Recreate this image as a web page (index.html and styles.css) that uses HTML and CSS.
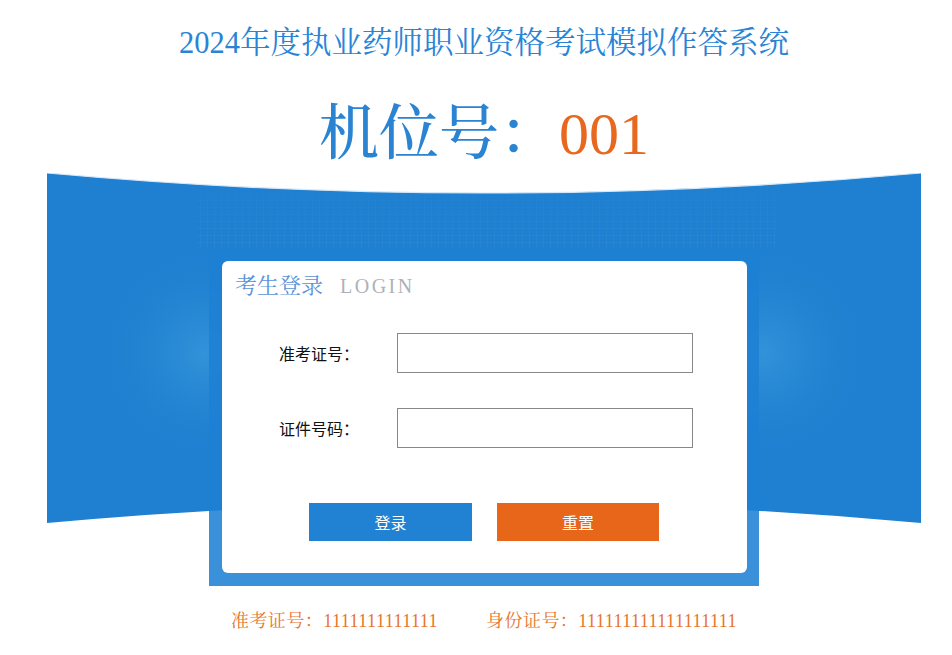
FILE: index.html
```html
<!DOCTYPE html>
<html lang="zh-CN">
<head>
  <meta charset="UTF-8">
  <title>2024年度执业药师职业资格考试模拟作答系统</title>
  <link rel="stylesheet" href="styles.css">
</head>
<body>
  <div class="page">
    <h1 class="title">2024年度执业药师职业资格考试模拟作答系统</h1>
    <div class="seat">机位号：<span class="seat-no">001</span></div>

    <div class="stage">
      <!-- curved blue banner behind the login box -->
      <svg class="banner" width="874" height="413" viewBox="0 0 874 413">
        <defs>
          <clipPath id="bannerClip">
            <path d="M0 0Q437 40 874 0V350Q437 310 0 350Z"/>
          </clipPath>
          <radialGradient id="glowL" cx="158" cy="180" r="110" gradientUnits="userSpaceOnUse">
            <stop offset="0" stop-color="#3b9bdc" stop-opacity="0.7"/>
            <stop offset="1" stop-color="#1f80d1" stop-opacity="0"/>
          </radialGradient>
          <radialGradient id="glowR" cx="716" cy="180" r="110" gradientUnits="userSpaceOnUse">
            <stop offset="0" stop-color="#3b9bdc" stop-opacity="0.7"/>
            <stop offset="1" stop-color="#1f80d1" stop-opacity="0"/>
          </radialGradient>
          <pattern id="grid" width="7" height="7" patternUnits="userSpaceOnUse">
            <path d="M7 0V7M0 7H7" stroke="#3d96da" stroke-width="1" fill="none"/>
          </pattern>
          <linearGradient id="gridFadeY" x1="0" y1="0" x2="0" y2="1">
            <stop offset="0" stop-color="#fff" stop-opacity="0"/>
            <stop offset="1" stop-color="#fff" stop-opacity="0.5"/>
          </linearGradient>
          <mask id="gridMask">
            <rect x="150" y="0" width="580" height="75" fill="url(#gridFadeY)"/>
          </mask>
        </defs>
        <g clip-path="url(#bannerClip)">
          <rect width="874" height="413" fill="#1f80d1"/>
          <rect x="0" y="40" width="330" height="320" fill="url(#glowL)"/>
          <rect x="544" y="40" width="330" height="320" fill="url(#glowR)"/>
          <rect x="150" y="0" width="580" height="75" fill="url(#grid)" mask="url(#gridMask)"/>
        </g>
        <path d="M0 0Q437 40 874 0" stroke="#d6e8f7" stroke-width="1.2" fill="none"/>
      </svg>

      <div class="frame">
        <div class="card">
          <div class="card-head">
            <span class="head-cn">考生登录</span>
            <span class="head-en">LOGIN</span>
          </div>
          <form class="login-form">
            <div class="row">
              <label for="ticket">准考证号：</label>
              <input type="text" id="ticket">
            </div>
            <div class="row">
              <label for="idno">证件号码：</label>
              <input type="text" id="idno">
            </div>
            <div class="actions">
              <button type="button" class="btn btn-login">登录</button>
              <button type="reset" class="btn btn-reset">重置</button>
            </div>
          </form>
        </div>
      </div>
    </div>

    <p class="info">
      <span>准考证号：1111111111111</span>
      <span>身份证号：111111111111111111</span>
    </p>
  </div>
</body>
</html>
```

FILE: styles.css
```css
* {
  box-sizing: border-box;
  margin: 0;
  padding: 0;
}

body {
  background: #fff;
  font-family: "Liberation Serif", "Noto Serif CJK SC", "Noto Sans CJK SC", serif;
}

.page {
  width: 874px;
  margin-left: 47px;
}

.title {
  margin-top: 28px;
  font-size: 30.5px;
  line-height: 30px;
  font-weight: normal;
  color: #2a84d6;
  text-align: center;
}

.seat {
  margin-top: 46px;
  font-size: 60px;
  line-height: 60px;
  font-weight: 500;
  color: #2a84d2;
  text-align: center;
}

.seat-no {
  font-weight: normal;
  color: #e8681e;
}

.stage {
  position: relative;
  margin-top: 9px;
  height: 413px;
  padding-top: 75px;
}

.banner {
  position: absolute;
  left: 0;
  top: 0;
}

.frame {
  position: relative;
  margin-left: 162px;
  width: 550px;
  height: 338px;
  padding: 13px 12px 13px 13px;
  background: rgba(30, 128, 211, 0.876);
}

.card {
  height: 312px;
  background: #fff;
  border-radius: 6px;
  padding: 7px 13px 0;
}

.card-head {
  display: flex;
  align-items: baseline;
  gap: 17px;
  height: 31px;
}

.head-cn {
  font-size: 22px;
  color: #5b93d6;
}

.head-en {
  font-size: 20px;
  letter-spacing: 2.5px;
  color: #aeb2b8;
}

.login-form {
  padding-top: 34px;
}

.row {
  display: flex;
  align-items: center;
  height: 40px;
  margin-bottom: 35px;
  padding-left: 44px;
}

.row label {
  width: 118px;
  font-family: "Noto Sans CJK SC", sans-serif;
  font-size: 16px;
  color: #111;
}

.row input {
  width: 296px;
  height: 40px;
  border: 1px solid #888;
  background: #fff;
}

.actions {
  display: flex;
  gap: 25px;
  padding-left: 74px;
  margin-top: 55px;
}

.btn {
  width: 163px;
  height: 38px;
  border: none;
  color: #fff;
  font-family: "Noto Sans CJK SC", sans-serif;
  font-size: 16px;
  cursor: pointer;
}

.btn-login {
  background: #2182d3;
}

.btn-reset {
  width: 162px;
  background: #e8661a;
}

.info {
  display: flex;
  justify-content: center;
  gap: 48px;
  margin-top: 25px;
  font-size: 18px;
  line-height: 20px;
  letter-spacing: 0.45px;
  color: #e8742c;
}
```
